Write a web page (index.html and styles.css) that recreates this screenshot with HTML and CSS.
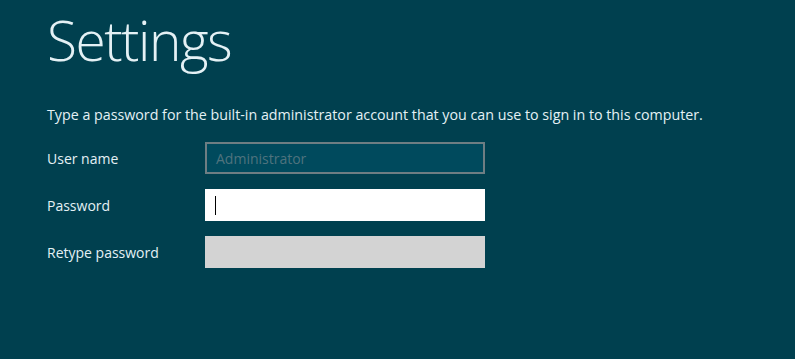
FILE: index.html
```html
<!DOCTYPE html>
<html lang="en">
<head>
    <meta charset="UTF-8">
    <meta name="viewport" content="width=device-width, initial-scale=1.0">
    <title>Settings</title>
    <link rel="stylesheet" href="styles.css">
</head>
<body>
    <div class="page">
        <h1 class="title">Settings</h1>
        <p class="intro">Type a password for the built-in administrator account that you can use to sign in to this computer.</p>

        <div class="form">
            <div class="row">
                <label class="label">User name</label>
                <div class="field field-user">Administrator</div>
            </div>
            <div class="row">
                <label class="label">Password</label>
                <div class="field field-active"><span class="caret"></span></div>
            </div>
            <div class="row">
                <label class="label">Retype password</label>
                <div class="field field-disabled"></div>
            </div>
        </div>
    </div>
</body>
</html>
```

FILE: styles.css
```css
body, html {
    margin: 0;
    padding: 0;
    background-color: #00404f;
    font-family: 'Open Sans', 'Noto Sans', sans-serif;
    color: #e4f1f5;
    overflow: hidden;
}

.page {
    padding: 0 0 0 47px;
}

.title {
    font-size: 55px;
    font-weight: 300;
    margin: 0;
    height: 84px;
    line-height: 80px;
    letter-spacing: -1.5px;
}

.intro {
    font-size: 14.25px;
    margin: 19px 0 0 0;
    line-height: 24px;
}

.form {
    display: flex;
    flex-direction: column;
    gap: 15px;
    margin-top: 15px;
}

.row {
    display: flex;
    align-items: center;
    height: 32px;
}

/* Labels column */
.label {
    width: 158px;
    font-size: 14px;
}

.field {
    box-sizing: border-box;
    width: 280px;
    height: 32px;
    display: flex;
    align-items: center;
    padding-left: 9px;
    font-size: 14px;
}

.field-user {
    background: #004a5d;
    border: 2px solid #6e7e83;
    color: #4f737d;
}

.field-active {
    background: #ffffff;
}

.caret {
    width: 1px;
    height: 19px;
    background: #000;
    margin-left: 1px;
}

.field-disabled {
    background: #d3d3d3;
}
```
